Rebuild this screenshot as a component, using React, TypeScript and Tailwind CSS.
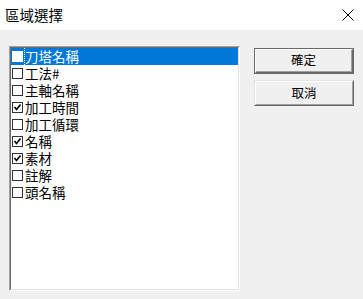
import React from "react";

const items: { label: string; checked: boolean }[] = [
  { label: "刀塔名稱", checked: false },
  { label: "工法#", checked: false },
  { label: "主軸名稱", checked: false },
  { label: "加工時間", checked: true },
  { label: "加工循環", checked: false },
  { label: "名稱", checked: true },
  { label: "素材", checked: true },
  { label: "註解", checked: false },
  { label: "頭名稱", checked: false },
];

function Check({ checked, selected }: { checked: boolean; selected: boolean }) {
  return (
    <div
      className={
        selected
          ? "w-[11px] h-[11px] bg-white border border-white flex-none"
          : "w-[11px] h-[11px] bg-white border border-[#333333] flex-none relative"
      }
    >
      {checked && (
        <svg width="9" height="9" viewBox="0 0 9 9" className="absolute left-0 top-0">
          <path d="M1.5 4 L3.5 6.5 L7.5 1.5" fill="none" stroke="#000" strokeWidth="1.6" />
        </svg>
      )}
    </div>
  );
}

export default function App() {
  const font = { fontFamily: '"Noto Sans CJK TC", "Noto Sans", sans-serif' };
  return (
    <div className="w-[363px] h-[299px] bg-[#f0f0f0] flex flex-col overflow-hidden" style={font}>
      <div className="h-[30px] bg-white flex items-center justify-between pl-[5px] pr-[9px]">
        <span className="text-[14.5px] text-black leading-none">區域選擇</span>
        <svg width="12" height="12" viewBox="0 0 12 12">
          <path d="M0.5 0.5 L11.5 11.5 M11.5 0.5 L0.5 11.5" stroke="#000" strokeWidth="1" />
        </svg>
      </div>
      <div className="flex pl-[9px] pt-[16px]">
        <div className="w-[231px] h-[245px] border-t border-l border-[#a0a0a0] border-r border-b border-r-white border-b-white">
          <div className="w-full h-full bg-white border-t border-l border-[#696969] border-r border-b border-r-[#e3e3e3] border-b-[#e3e3e3] flex flex-col">
            {items.map((it, i) => {
              const sel = i === 0;
              return (
                <div
                  key={it.label}
                  className={
                    sel
                      ? "h-[17px] flex items-center bg-[#0078d7] text-white pl-[1px]"
                      : "h-[17px] flex items-center text-black pl-[1px]"
                  }
                >
                  <Check checked={it.checked} selected={sel} />
                  <span
                    className={
                      sel
                        ? "h-full flex items-center ml-[1px] border-l border-dotted border-white text-[13.5px] leading-[15px]"
                        : "h-full flex items-center ml-[2px] text-[13.5px] leading-[15px]"
                    }
                  >
                    {it.label}
                  </span>
                </div>
              );
            })}
          </div>
        </div>
        <div className="flex flex-col ml-[14px] mt-[2px] gap-[6px]">
          <div className="w-[100px] h-[26px] border border-[#696969]">
            <div className="w-full h-full border-t border-l border-white border-r border-b border-r-[#696969] border-b-[#696969] bg-[#f0f0f0]">
              <div className="w-full h-full border-r border-b border-[#a0a0a0] flex items-center justify-center text-[12.5px] text-black leading-none">
                確定
              </div>
            </div>
          </div>
          <div className="w-[100px] h-[26px] border-t border-l border-[#e3e3e3] border-r border-b border-r-[#696969] border-b-[#696969]">
            <div className="w-full h-full border-t border-l border-white border-r border-b border-r-[#a0a0a0] border-b-[#a0a0a0] bg-[#f0f0f0] flex items-center justify-center text-[12.5px] text-black leading-none">
              取消
            </div>
          </div>
        </div>
      </div>
    </div>
  );
}
